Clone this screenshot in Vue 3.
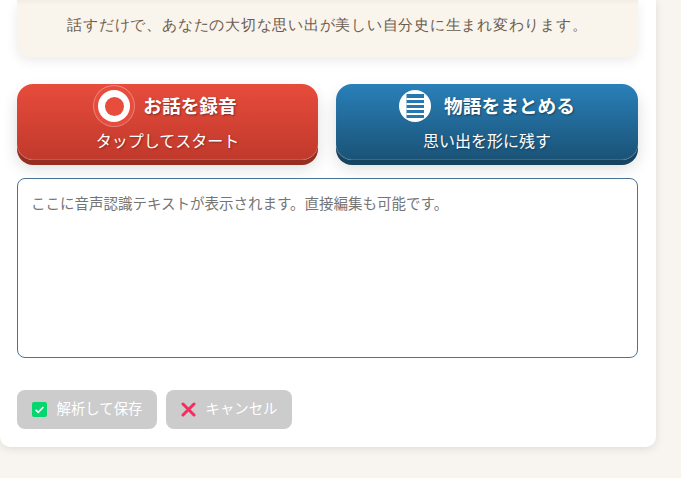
<script setup>
const note = 'ここに音声認識テキストが表示されます。直接編集も可能です。'
</script>

<template>
  <div class="page">
    <main class="card">
      <section class="intro">
        <p>話すだけで、あなたの大切な思い出が美しい自分史に生まれ変わります。</p>
      </section>
      <div class="actions">
        <button class="big red" type="button">
          <span class="head">
            <span class="rec"><span class="dot"></span></span>
            <span class="title">お話を録音</span>
          </span>
          <span class="sub">タップしてスタート</span>
        </button>
        <button class="big blue" type="button">
          <span class="head">
            <svg class="doc" viewBox="0 0 32 32" width="32" height="32">
              <circle cx="16" cy="16" r="16" fill="#fff"/>
              <rect x="7.5" y="4" width="17.5" height="24" fill="#2878b0"/>
              <g fill="#fff">
                <rect x="7.5" y="8" width="17.5" height="2"/>
                <rect x="7.5" y="13" width="17.5" height="2"/>
                <rect x="7.5" y="18" width="17.5" height="2"/>
                <rect x="7.5" y="23" width="17.5" height="2"/>
              </g>
            </svg>
            <span class="title">物語をまとめる</span>
          </span>
          <span class="sub">思い出を形に残す</span>
        </button>
      </div>
      <textarea class="area" :placeholder="note"></textarea>
      <div class="foot">
        <button class="small" type="button">
          <svg class="ico" viewBox="0 0 15 15" width="15" height="15">
            <rect width="15" height="15" rx="2" fill="#06d66e"/>
            <path d="M3.6 7.8 6.3 10.3 11.4 5" fill="none" stroke="#fff" stroke-width="1.6"/>
          </svg>
          解析して保存
        </button>
        <button class="small wide" type="button">
          <svg class="ico" viewBox="0 0 15 15" width="15" height="15">
            <path d="M2 2 13 13M13 2 2 13" stroke="#f52c5c" stroke-width="3" stroke-linecap="round"/>
          </svg>
          キャンセル
        </button>
      </div>
    </main>
    <div class="next"></div>
  </div>
</template>

<style>
body { margin: 0; background: #f8f5f0; }
</style>

<style scoped>
.page { height: 478px; overflow: hidden; background: #f8f5f0; font-family: "Noto Sans CJK JP", "Noto Sans", sans-serif; }
.card { width: 656px; height: 447px; box-sizing: border-box; padding: 0 18px 0 17px; background: #fff; border-radius: 0 0 10px 10px; box-shadow: 0 2px 8px rgba(0,0,0,.1); }
.intro { height: 57px; box-sizing: border-box; padding-top: 15px; background: #f9f4ec; border-radius: 0 0 12px 12px; box-shadow: 0 4px 12px rgba(0,0,0,.08), inset 0 5px 5px -4px rgba(0,0,0,.05); text-align: center; }
.intro p { margin: 0; font: 15.2px/20px "Liberation Serif", serif; letter-spacing: .76px; color: #6d5d4f; }
.actions { display: grid; grid-template-columns: 301px 302px; gap: 18px; margin-top: 27px; }
.big { height: 76px; padding: 0; border: 0; color: #fff; border-radius: 16px; display: flex; flex-direction: column; align-items: center; font-family: inherit; }
.red { background: linear-gradient(#e74c3c, #c0392b); box-shadow: 0 5px 0 #962d22, 0 8px 16px rgba(0,0,0,.14), inset 0 -1px 1px rgba(255,255,255,.15); }
.blue { background: linear-gradient(#2980b9, #1a5276); box-shadow: 0 5px 0 #154360, 0 8px 16px rgba(0,0,0,.14), inset 0 -1px 1px rgba(255,255,255,.15); }
.head { display: flex; align-items: center; gap: 13px; margin-top: 6px; height: 32px; }
.title { margin-top: -2px; font-size: 18.7px; font-weight: 700; line-height: 24px; text-shadow: 1px 1px 2px rgba(0,0,0,.4); }
.sub { margin-top: 6px; font-size: 16px; line-height: 24px; text-shadow: 1px 1px 2px rgba(0,0,0,.3); }
.rec { width: 32px; height: 32px; border-radius: 50%; background: #fff; display: grid; place-items: center; box-shadow: 0 0 0 4px #e74c3c, 0 0 0 5px rgba(255,255,255,.35); }
.dot { width: 19px; height: 19px; border-radius: 50%; background: #e74c3c; }
.doc { display: block; }
.area { display: block; width: 100%; height: 180px; box-sizing: border-box; margin-top: 18px; padding: 14px 13px; border: 1px solid #4a7396; border-radius: 8px; resize: none; font: 14.5px/20px "Noto Sans CJK JP", sans-serif; }
.area::placeholder { color: #757575; }
.foot { display: flex; gap: 9px; margin-top: 32px; }
.small { height: 39px; width: 140px; padding: 0 0 3px; border: 0; border-radius: 8px; background: #ccc; color: #fff; font: 400 14.4px/20px "Noto Sans CJK JP", sans-serif; display: flex; align-items: center; justify-content: center; gap: 10px; }
.ico { flex: none; margin-top: 3px; }
.wide { width: 126px; }
.next { height: 3px; margin-top: 28px; background: #faf3e8; }
</style>
